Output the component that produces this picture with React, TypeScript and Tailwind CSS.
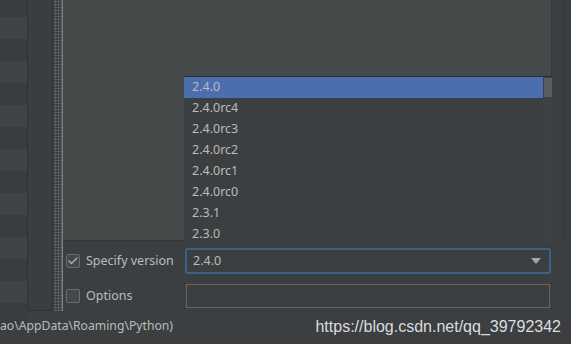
import {Check} from "lucide-react";

const versions = ["2.4.0", "2.4.0rc4", "2.4.0rc3", "2.4.0rc2", "2.4.0rc1", "2.4.0rc0", "2.3.1", "2.3.0"];

const Checkbox = ({checked}: {checked: boolean}) => (
    <div className="w-[14px] h-[14px] border border-[#6b6b6b] rounded-[2px] bg-[#43494a] flex items-center justify-center">
        {checked && <Check size={12} strokeWidth={2.5} className="text-[#a9b0b4]"/>}
    </div>
);

export default function App() {
    return (
        <div className="w-[571px] h-[344px] bg-[#3c3f41] overflow-hidden flex flex-col text-[#bbbbbb]"
             style={{fontFamily: '"Noto Sans", "Open Sans", sans-serif'}}>
            <div className="flex h-[311px]">
                {/* striped list */}
                <div className="w-[28px] flex flex-col -mt-[5px] border-r border-[#2f3133] border-b">
                    {Array.from({length: 15}).map((_, i) => (
                        <div key={i} className={`h-[22px] shrink-0 ${i % 2 === 0 ? "bg-[#3a3d3f]" : "bg-[#414446]"}`}/>
                    ))}
                </div>
                <div className="w-[25px] bg-[#3b3e40] border-r border-[#2f3133] border-b"/>
                {/* splitter */}
                <div className="w-[9px] bg-[#3c3f41] [background-image:radial-gradient(#66696b_0.9px,transparent_1.1px)] [background-size:3px_3px] [background-position:1px_0]"/>
                <div className="w-px bg-[#7d8185]"/>
                <div className="flex-1 flex flex-col relative">
                    <div className="flex h-[241px]">
                        <div className="w-[489px] bg-[#46494a] border-r border-b border-[#343638]"/>
                        <div className="w-[12px] bg-[#3c3f41] border-r border-[#343638]"/>
                    </div>

                    {/* dropdown popup */}
                    <div className="absolute left-[121px] top-[76px] w-[369px] h-[167px] bg-[#3c3f41] border-t border-[#2b2d2e] flex overflow-hidden">
                        <div className="flex-1 flex flex-col">
                            {versions.map((v, i) => (
                                <div key={v}
                                     className={`h-[21px] shrink-0 pl-[8px] flex items-center text-[12.5px] leading-none ${i === 0 ? "bg-[#4b6eaf]" : ""}`}>
                                    {v}
                                </div>
                            ))}
                        </div>
                        <div className="w-[10px] bg-[#3e4142] pt-px pl-px">
                            <div className="w-[8px] h-[19px] bg-[#5b5e5f]"/>
                        </div>
                    </div>

                    <div className="flex items-center h-[32px] mt-[4px] pl-[3px]">
                        <Checkbox checked/>
                        <span className="ml-[6px] text-[12.5px] w-[99px]">Specify version</span>
                        <div className="w-[366px] h-[26px] border-2 border-[#3d6185] rounded-[3px] flex items-center justify-between px-[6px]">
                            <span className="text-[12.5px]">2.4.0</span>
                            <svg width="10" height="6" viewBox="0 0 10 6" className="mr-[2px]">
                                <path d="M0 0 L10 0 L5 6 Z" fill="#a4a7a9"/>
                            </svg>
                        </div>
                    </div>
                    <div className="flex items-center h-[26px] mt-[6px] pl-[3px]">
                        <Checkbox checked={false}/>
                        <span className="ml-[6px] text-[12.5px] w-[100px]">Options</span>
                        <div className="w-[364px] h-[24px] border border-[#646464]"/>
                    </div>
                </div>
            </div>
            <div className="flex items-center justify-between h-[33px] pr-[10px] -mt-[1px]">
                <span className="text-[12.2px] text-[#bbbbbb]">ao\AppData\Roaming\Python)</span>
                <span className="text-[16px] text-[#dcdcdc]" style={{fontFamily: '"Liberation Sans", Arial, sans-serif'}}>
                    https://blog.csdn.net/qq_39792342
                </span>
            </div>
        </div>
    );
}
